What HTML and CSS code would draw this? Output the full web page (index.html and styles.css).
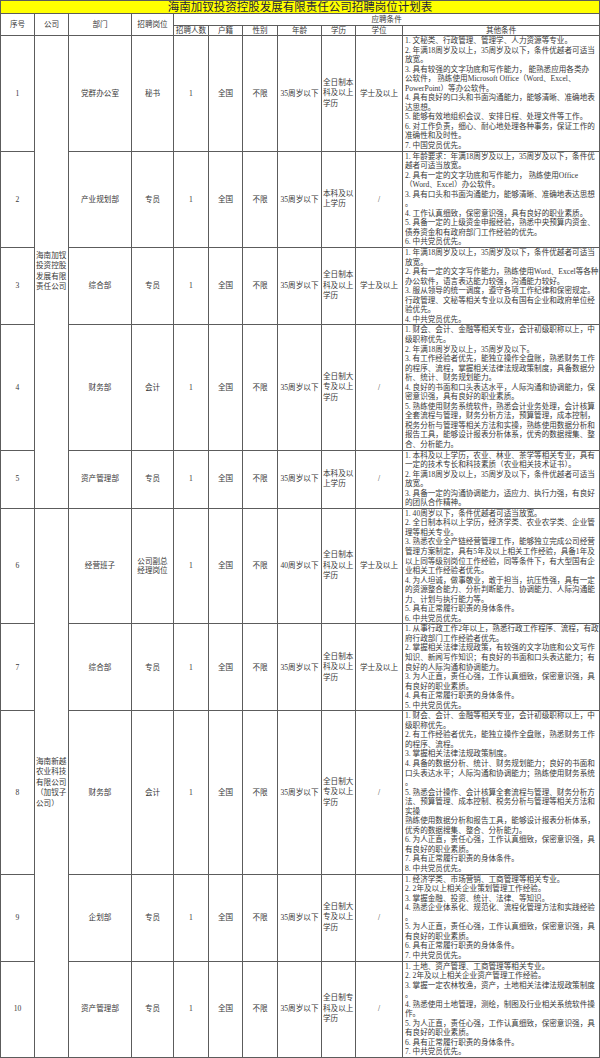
FILE: index.html
```html
<!DOCTYPE html>
<html lang="zh-CN">
<head>
<meta charset="utf-8">
<title>海南加钗投资控股发展有限责任公司招聘岗位计划表</title>
<link rel="stylesheet" href="styles.css">
</head>
<body>
<table class="plan">
  <colgroup>
    <col class="c-no"><col class="c-co"><col class="c-dept"><col class="c-post"><col class="c-num"><col class="c-hj"><col class="c-sex"><col class="c-age"><col class="c-edu"><col class="c-deg"><col class="c-other">
  </colgroup>
  <thead>
    <tr class="title-row"><th colspan="11" class="title">海南加钗投资控股发展有限责任公司招聘岗位计划表</th></tr>
    <tr class="head1">
      <th rowspan="2">序号</th><th rowspan="2">公司</th><th rowspan="2">部门</th><th rowspan="2">招聘岗位</th>
      <th colspan="7">应聘条件</th>
    </tr>
    <tr class="head2">
      <th>招聘人数</th><th>户籍</th><th>性别</th><th>年龄</th><th>学历</th><th>学位</th><th>其他条件</th>
    </tr>
  </thead>
  <tbody>
    <tr>
      <td>1</td>
      <td rowspan="5" class="co">海南加钗<br>投资控股<br>发展有限<br>责任公司</td>
      <td>党群办公室</td><td>秘书</td><td>1</td><td>全国</td><td>不限</td><td>35周岁以下</td>
      <td class="edu">全日制本<br>科及以上<br>学历</td><td>学士及以上</td>
      <td class="other">1. 文秘类、行政管理、管理学、人力资源等专业。<br>2. 年满18周岁及以上，35周岁及以下，条件优越者可适当<br>放宽。<br>3. 具有较强的文字功底和写作能力，  能熟悉应用各类办<br>公软件，  熟练使用Microsoft Office（Word、Excel、<br>PowerPoint）等办公软件。<br>4. 具有良好的口头和书面沟通能力，能够清晰、准确地表<br>达思想。<br>5. 能够有效地组织会议、安排日程、处理文件等工作。<br>6. 对工作负责，细心、耐心地处理各种事务，保证工作的<br>准确性和及时性。<br>7. 中国党员优先。</td>
    </tr>
    <tr>
      <td>2</td>
      <td>产业规划部</td><td>专员</td><td>1</td><td>全国</td><td>不限</td><td>35周岁以下</td>
      <td class="edu">本科及以<br>上学历</td><td>/</td>
      <td class="other">1. 年龄要求：年满18周岁及以上，35周岁及以下，条件优<br>越者可适当放宽。<br>2. 具有一定的文字功底和写作能力，  熟练使用Office<br>（Word、Excel）办公软件。<br>3. 具有口头和书面沟通能力，能够清晰、准确地表达思想<br>。<br>4. 工作认真细致，保密意识强，具有良好的职业素质。<br>5. 具备一定的上级资金申报经验，熟悉中央预算内资金、<br>债券资金和有政府部门工作经验的优先。<br>6. 中共党员优先。</td>
    </tr>
    <tr>
      <td>3</td>
      <td>综合部</td><td>专员</td><td>1</td><td>全国</td><td>不限</td><td>35周岁以下</td>
      <td class="edu">全日制本<br>科及以上<br>学历</td><td>学士及以上</td>
      <td class="other">1. 年满18周岁及以上，35周岁及以下，条件优越者可适当<br>放宽。<br>2. 具有一定的文字写作能力，熟练使用Word、Excel等各种<br>办公软件，语言表达能力较强，沟通能力较好。<br>3. 服从领导的统一调度，遵守各项工作纪律和保密规定。<br>行政管理、文秘等相关专业以及有国有企业和政府单位经<br>验优先。<br>4. 中共党员优先。</td>
    </tr>
    <tr>
      <td>4</td>
      <td>财务部</td><td>会计</td><td>1</td><td>全国</td><td>不限</td><td>35周岁以下</td>
      <td class="edu">全日制大<br>专及以上<br>学历</td><td>/</td>
      <td class="other">1. 财会、会计、金融等相关专业，会计初级职称以上，中<br>级职称优先。<br>2. 年满18周岁及以上，35周岁及以下。<br>3. 有工作经验者优先，能独立操作全盘账，熟悉财务工作<br>的程序、流程，掌握相关法律法规政策制度，具备数据分<br>析、统计、财务规划能力。<br>4. 良好的书面和口头表达水平，人际沟通和协调能力，保<br>密意识强，具有良好的职业素质。<br>5. 熟练使用财务系统软件，熟悉会计业务处理，会计核算<br>全套流程与管理，财务分析方法，预算管理，成本控制，<br>税务分析与管理等相关方法和实操，熟练使用数据分析和<br>报告工具，能够设计报表分析体系，优秀的数据搜集、整<br>合、分析能力。</td>
    </tr>
    <tr>
      <td>5</td>
      <td>资产管理部</td><td>专员</td><td>1</td><td>全国</td><td>不限</td><td>35周岁以下</td>
      <td class="edu">本科及以<br>上学历</td><td>/</td>
      <td class="other">1. 本科及以上学历，农业、林业、茶学等相关专业，具有<br>一定的技术专长和科技素质（农业相关技术证书）。<br>2. 年满18周岁及以上，35周岁及以下，条件优越者可适当<br>放宽。<br>3. 具备一定的沟通协调能力，适应力、执行力强，有良好<br>的团队合作精神。</td>
    </tr>
    <tr>
      <td>6</td>
      <td rowspan="5" class="co">海南新越<br>农业科技<br>有限公司<br>（加钗子<br>公司）</td>
      <td>经营班子</td><td>公司副总<br>经理岗位</td><td>1</td><td>全国</td><td>不限</td><td>40周岁以下</td>
      <td class="edu">全日制本<br>科及以上<br>学历</td><td>学士及以上</td>
      <td class="other">1. 40周岁以下，条件优越者可适当放宽。<br>2. 全日制本科以上学历，经济学类、农业农学类、企业管<br>理等相关专业。<br>3. 熟悉农业全产链经营管理工作，能够独立完成公司经营<br>管理方案制定，具有5年及以上相关工作经验，具备1年及<br>以上同等级别岗位工作经验，同等条件下，有大型国有企<br>业相关工作经验者优先。<br>4. 为人坦诚，做事敬业，敢于担当，抗压性强，具有一定<br>的资源整合能力、分析判断能力、协调能力、人际沟通能<br>力、计划与执行能力等。<br>5. 具有正常履行职责的身体条件。<br>6. 中共党员优先。</td>
    </tr>
    <tr>
      <td>7</td>
      <td>综合部</td><td>专员</td><td>1</td><td>全国</td><td>不限</td><td>35周岁以下</td>
      <td class="edu">全日制本<br>科及以上<br>学历</td><td>学士及以上</td>
      <td class="other">1. 从事行政工作2年以上，熟悉行政工作程序、流程，有政<br>府行政部门工作经验者优先。<br>2. 掌握相关法律法规政策，有较强的文字功底和公文写作<br>知识、新闻写作知识；有良好的书面和口头表达能力；有<br>良好的人际沟通和协调能力。<br>3. 为人正直，责任心强，工作认真细致，保密意识强，具<br>有良好的职业素质。<br>4. 具有正常履行职责的身体条件。<br>5. 中共党员优先。</td>
    </tr>
    <tr>
      <td>8</td>
      <td>财务部</td><td>会计</td><td>1</td><td>全国</td><td>不限</td><td>35周岁以下</td>
      <td class="edu">全日制大<br>专及以上<br>学历</td><td>/</td>
      <td class="other">1. 财会、会计、金融等相关专业，会计初级职称以上，中<br>级职称优先。<br>2. 有工作经验者优先，能独立操作全盘账，熟悉财务工作<br>的程序、流程。<br>3. 掌握相关法律法规政策制度。<br>4. 具备的数据分析、统计、财务规划能力；良好的书面和<br>口头表达水平；人际沟通和协调能力；熟练使用财务系统<br>。<br>5. 熟悉会计操作、会计核算全套流程与管理、财务分析方<br>法、预算管理、成本控制、税务分析与管理等相关方法和<br>实操<br>熟练使用数据分析和报告工具，能够设计报表分析体系，<br>优秀的数据搜集、整合、分析能力。<br>6. 为人正直，责任心强，工作认真细致，保密意识强，具<br>有良好的职业素质。<br>7. 具有正常履行职责的身体条件。<br>8. 中共党员优先。</td>
    </tr>
    <tr>
      <td>9</td>
      <td>企划部</td><td>专员</td><td>1</td><td>全国</td><td>不限</td><td>35周岁以下</td>
      <td class="edu">全日制大<br>专及以上<br>学历</td><td>/</td>
      <td class="other">1. 经济学类、市场营销、工商管理等相关专业。<br>2. 2年及以上相关企业策划管理工作经验。<br>3. 掌握金融、投资、统计、法律、等知识。<br>4. 熟悉企业体系化、规范化、流程化管理方法和实践经验<br>。<br>5. 为人正直，责任心强，工作认真细致，保密意识强，具<br>有良好的职业素质。<br>6. 具有正常履行职责的身体条件。<br>7. 中共党员优先。</td>
    </tr>
    <tr>
      <td>10</td>
      <td>资产管理部</td><td>专员</td><td>1</td><td>全国</td><td>不限</td><td>35周岁以下</td>
      <td class="edu">全日制专<br>科及以上<br>学历</td><td>/</td>
      <td class="other">1. 土地、资产管理、工商管理等相关专业。<br>2. 2年及以上相关企业资产管理工作经验。<br>3. 掌握一定农林牧渔，资产，土地相关法律法规政策制度<br>。<br>4. 熟悉使用土地管理，测绘，制图及行业相关系统软件操<br>作。<br>5. 为人正直，责任心强，工作认真细致，保密意识强，具<br>有良好的职业素质。<br>6. 具有正常履行职责的身体条件。<br>7. 中共党员优先。</td>
    </tr>
  </tbody>
</table>
</body>
</html>
```
FILE: styles.css
```css
html, body {
  margin: 0;
  padding: 0;
  background: #ffffff;
}

.plan {
  width: 599px;
  table-layout: fixed;
  border-collapse: collapse;
  font-family: "Liberation Serif", "Noto Sans CJK SC", serif;
  font-size: 7.6px;
  color: #383838;
}

.c-no { width: 34px; }
.c-co { width: 34px; }
.c-dept { width: 63px; }
.c-post { width: 42px; }
.c-num { width: 35px; }
.c-hj { width: 34px; }
.c-sex { width: 35px; }
.c-age { width: 44px; }
.c-edu { width: 34px; }
.c-deg { width: 47px; }
.c-other { width: 197px; }

.plan th,
.plan td {
  border: 1px solid #5c5c5c;
  padding: 0;
  text-align: center;
  vertical-align: middle;
  font-weight: normal;
  white-space: nowrap;
  overflow: hidden;
  line-height: 9.55px;
}

.plan .title {
  background: #ffff00;
  color: #1e1e3c;
  font-size: 11.5px;
  line-height: 12px;
  height: 12px;
}

.head1 th {
  height: 11px;
  line-height: 10px;
}

.head2 th {
  height: 9px;
  line-height: 9px;
}

.plan .co {
  text-align: left;
  padding-left: 1px;
  line-height: 10.5px;
}

.plan .edu {
  text-align: left;
  padding-left: 1px;
  line-height: 10.5px;
}

.plan .other {
  text-align: left;
  vertical-align: top;
  padding: 0 1px 0 2px;
}
```
